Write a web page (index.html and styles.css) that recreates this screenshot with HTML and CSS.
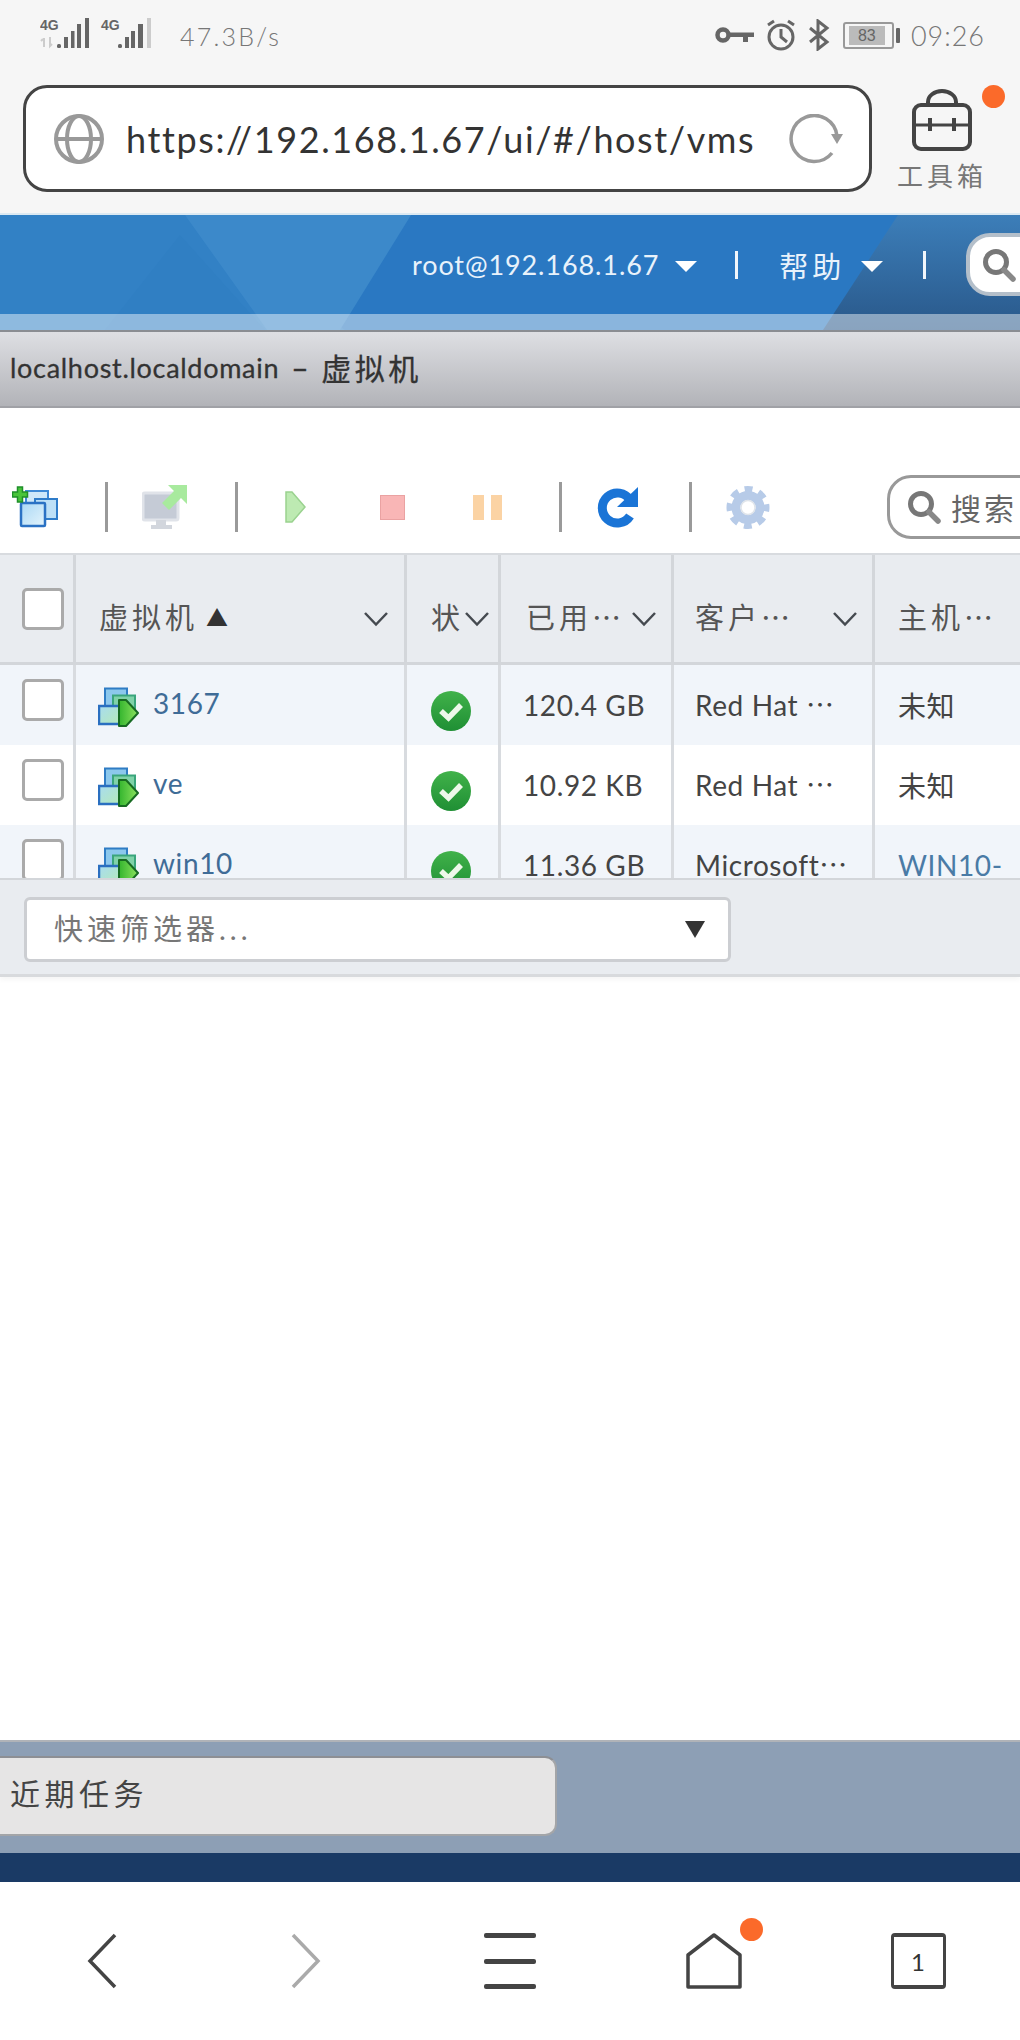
FILE: index.html
```html
<!DOCTYPE html>
<html lang="zh-CN">
<head>
    <meta charset="UTF-8">
    <meta name="viewport" content="width=device-width, initial-scale=1.0">
    <title>localhost.localdomain - 虚拟机</title>
    <link rel="stylesheet" href="styles.css">
</head>
<body>
    <svg class="defs" width="0" height="0">
        <defs>
            <linearGradient id="winFill" x1="0" y1="0" x2="1" y2="1">
                <stop offset="0" stop-color="#a9d8f5"/>
                <stop offset="1" stop-color="#e4f4fc"/>
            </linearGradient>
            <linearGradient id="vmFill" x1="0" y1="0" x2="1" y2="1">
                <stop offset="0" stop-color="#a8dcf0"/>
                <stop offset="1" stop-color="#b6eab8"/>
            </linearGradient>
            <linearGradient id="vmArrow" x1="0" y1="0" x2="1" y2="0">
                <stop offset="0" stop-color="#34b52e"/>
                <stop offset="1" stop-color="#8ce25e"/>
            </linearGradient>
            <linearGradient id="okFill" x1="0" y1="0" x2="0" y2="1">
                <stop offset="0" stop-color="#41b24a"/>
                <stop offset="1" stop-color="#1f8f34"/>
            </linearGradient>
            <symbol id="vm" viewBox="0 0 42 40">
                <rect x="7" y="1.5" width="22" height="20" fill="#8cc8ec" stroke="#2f7cc4" stroke-width="2"/>
                <rect x="15" y="8.500" width="22" height="20" fill="#7fd2a8" stroke="#3aa57c" stroke-width="2"/>
                <rect x="1" y="19" width="22" height="18" fill="url(#vmFill)" stroke="#2a6fc0" stroke-width="2.500"/>
                <path d="M21 13 H28 L40 26 L28 39 H21 Z" fill="url(#vmArrow)" stroke="#176b22" stroke-width="2" stroke-linejoin="round"/>
            </symbol>
            <symbol id="ok" viewBox="0 0 40 40">
                <circle cx="20" cy="20" r="20" fill="url(#okFill)"/>
                <path d="M10 20 L17.500 27 L30 14" fill="none" stroke="#eef8ea" stroke-width="5.500"/>
            </symbol>
            <symbol id="chev" viewBox="0 0 26 16">
                <path d="M2 2 L13 13.500 L24 2" fill="none" stroke="#454a50" stroke-width="2.500"/>
            </symbol>
            <symbol id="mag" viewBox="0 0 34 34">
                <circle cx="14" cy="14" r="10.500" fill="none" stroke="#777" stroke-width="5"/>
                <path d="M22 22 L31 31" stroke="#888" stroke-width="5.500" stroke-linecap="round"/>
            </symbol>
        </defs>
    </svg>

    <div class="status">
        <svg class="signal" width="116" height="34" viewBox="0 0 116 34">
            <text class="sig-text" x="0" y="13">4G</text>
            <text class="sig-text" x="61" y="13">4G</text>
            <path d="M4 30 V21 M3 22 L1 24 M10 20 V29 L12 27" stroke="#ccc" stroke-width="2" fill="none"/>
            <g fill="#666">
                <rect x="17" y="27" width="4" height="4" rx="1.500"/>
                <rect x="24" y="20" width="4" height="11"/>
                <rect x="31" y="14" width="3.500" height="17"/>
                <rect x="37" y="7" width="4" height="24"/>
                <rect x="45" y="1" width="4" height="30"/>
                <rect x="78" y="27" width="4" height="4" rx="1.500"/>
                <rect x="85" y="20" width="4" height="11"/>
                <rect x="91" y="14" width="4" height="17"/>
                <rect x="98" y="7" width="5" height="24"/>
            </g>
            <rect x="107" y="1" width="4" height="30" fill="#ccc"/>
        </svg>
        <span class="speed">47.3B/s</span>
        <svg class="key" width="39" height="17" viewBox="0 0 39 17">
            <circle cx="8" cy="8" r="5.500" fill="none" stroke="#666" stroke-width="4.500"/>
            <path d="M14 5.500 H39 V10 H33 V15 H28 V10 H14 Z" fill="#666"/>
        </svg>
        <svg class="alarm" width="32" height="32" viewBox="0 0 32 32">
            <circle cx="16" cy="18" r="12" fill="none" stroke="#666" stroke-width="3"/>
            <path d="M16 10 V18 L22 23" fill="none" stroke="#666" stroke-width="3"/>
            <path d="M3 6 L9 2 M29 6 L23 2" stroke="#666" stroke-width="3"/>
        </svg>
        <svg class="bt" width="22" height="32" viewBox="0 0 22 32">
            <path d="M2 9 L19 23 L10 30 V2 L19 9 L2 23" fill="none" stroke="#666" stroke-width="3"/>
        </svg>
        <div class="battery"><span class="battery-fill">83</span></div>
        <span class="battery-nub"></span>
        <span class="clock">09:26</span>
    </div>

    <div class="chrome">
        <div class="addr">
            <svg class="globe" width="50" height="50" viewBox="0 0 50 50">
                <circle cx="25" cy="25" r="23" fill="none" stroke="#999" stroke-width="4"/>
                <ellipse cx="25" cy="25" rx="12" ry="23" fill="none" stroke="#999" stroke-width="4"/>
                <path d="M2 25 H48" stroke="#999" stroke-width="4"/>
            </svg>
            <span class="url">https://192.168.1.67/ui/#/host/vms</span>
            <svg class="reload" width="57" height="50" viewBox="0 0 57 50">
                <path d="M45 39 A23 23 0 1 1 50 22" fill="none" stroke="#999" stroke-width="3.500"/>
                <path d="M44 20 H56 L50 30 Z" fill="#999"/>
            </svg>
        </div>
        <div class="toolbox">
            <svg width="60" height="62" viewBox="0 0 60 62">
                <rect x="2" y="16" width="56" height="44" rx="7" fill="none" stroke="#444" stroke-width="4"/>
                <path d="M16 16 V13 A14 11 0 0 1 44 13 V16" fill="none" stroke="#444" stroke-width="4"/>
                <path d="M2 36 H58" stroke="#444" stroke-width="3"/>
                <path d="M18 29 V42 M42 29 V42" stroke="#444" stroke-width="4"/>
            </svg>
            <span class="toolbox-label">工具箱</span>
            <span class="toolbox-dot"></span>
        </div>
    </div>

    <header class="hdr">
        <span class="hdr-tri"></span>
        <div class="hdr-main">
            <span class="hdr-user">root@192.168.1.67</span>
            <span class="caret"></span>
            <span class="hdr-sep"></span>
            <span class="hdr-help">帮助</span>
            <span class="caret"></span>
            <span class="hdr-sep hdr-sep-2"></span>
            <div class="hdr-search">
                <svg width="34" height="34"><use href="#mag"/></svg>
            </div>
        </div>
        <div class="hdr-band"></div>
    </header>

    <div class="title-bar">
        <span>localhost.localdomain</span>
        <span class="title-dash">–</span>
        <span class="title-cn">虚拟机</span>
    </div>

    <div class="toolbar">
        <svg class="tb-add" width="46" height="42" viewBox="0 0 46 42">
            <rect x="14" y="5" width="22" height="22" fill="#cfe8f9" stroke="#3f8ad6" stroke-width="2"/>
            <rect x="23" y="13" width="22" height="20" fill="#bde0f7" stroke="#2f7cc9" stroke-width="2"/>
            <rect x="9" y="17" width="24" height="23" rx="1" fill="url(#winFill)" stroke="#2b72c4" stroke-width="2.500"/>
            <path d="M5.500 1 H10.500 V6 H15.500 V11 H10.500 V16 H5.500 V11 H.5 V6 H5.500 Z" fill="#49c43a" stroke="#1f8f2a" stroke-width="1.500"/>
        </svg>
        <span class="tb-sep tb-sep-1"></span>
        <svg class="tb-console" width="46" height="46" viewBox="0 0 46 46">
            <rect x="1" y="9" width="35" height="27" rx="2" fill="#c5cbd6" stroke="#e0e3e9" stroke-width="3"/>
            <path d="M14 36 H24 V41 H30 V45 H9 V41 H14 Z" fill="#d2d6dd"/>
            <path d="M26 1 H45 V20 L39 14 L27 26 L20 19 L32 7 Z" fill="#a8ea9e"/>
        </svg>
        <span class="tb-sep tb-sep-2"></span>
        <svg class="tb-play" width="21" height="32" viewBox="0 0 21 32">
            <path d="M1 1 H7 L20 16 L7 31 H1 Z" fill="#bdeab2" stroke="#9ad28f" stroke-width="1.500"/>
        </svg>
        <span class="tb-stop"></span>
        <span class="tb-pause"><i></i><i></i></span>
        <span class="tb-sep tb-sep-3"></span>
        <svg class="tb-refresh" width="43" height="44" viewBox="0 0 43 44">
            <path d="M33 15 A15 15 0 1 0 33 31" fill="none" stroke="#1a74d6" stroke-width="9"/>
            <path d="M41 2 V22 H20 Z" fill="#1a74d6"/>
        </svg>
        <span class="tb-sep tb-sep-4"></span>
        <svg class="tb-gear" width="46" height="45" viewBox="0 0 46 45">
            <circle cx="23" cy="22.500" r="17.500" fill="none" stroke="#b7cbe8" stroke-width="8" stroke-dasharray="7.500 6.240" stroke-dashoffset="3.750"/>
            <circle cx="23" cy="22.500" r="12" fill="none" stroke="#b7cbe8" stroke-width="9"/>
            <circle cx="23" cy="22.500" r="7" fill="#fff" stroke="#dfe4ea" stroke-width="1.500"/>
        </svg>
        <div class="tb-search">
            <svg width="34" height="34"><use href="#mag"/></svg>
            <span>搜索</span>
        </div>
    </div>

    <div class="grid-wrap">
        <table class="grid">
            <colgroup>
                <col class="c-check"><col class="c-name"><col class="c-state"><col class="c-used"><col class="c-guest"><col class="c-host">
            </colgroup>
            <thead>
                <tr>
                    <th><span class="box"></span></th>
                    <th><div class="th-in"><span>虚拟机</span><span class="sort">▲</span><svg class="chev" width="26" height="16"><use href="#chev"/></svg></div></th>
                    <th class="th-tight"><div class="th-in"><span>状</span><svg class="chev" width="26" height="16"><use href="#chev"/></svg></div></th>
                    <th class="th-used"><div class="th-in"><span>已用<span class="ell">…</span></span><svg class="chev" width="26" height="16"><use href="#chev"/></svg></div></th>
                    <th class="th-guest"><div class="th-in"><span>客户<span class="ell">…</span></span><svg class="chev" width="26" height="16"><use href="#chev"/></svg></div></th>
                    <th class="th-host"><div class="th-in"><span>主机<span class="ell">…</span></span></div></th>
                </tr>
            </thead>
            <tbody>
                <tr>
                    <td class="td-check"><span class="box"></span></td>
                    <td class="td-name"><div class="vm"><svg width="42" height="40"><use href="#vm"/></svg><a>3167</a></div></td>
                    <td class="td-state"><svg width="40" height="40"><use href="#ok"/></svg></td>
                    <td class="td-used">120.4 GB</td>
                    <td class="td-guest">Red Hat <span class="ell">…</span></td>
                    <td class="td-host">未知</td>
                </tr>
                <tr>
                    <td class="td-check"><span class="box"></span></td>
                    <td class="td-name"><div class="vm"><svg width="42" height="40"><use href="#vm"/></svg><a>ve</a></div></td>
                    <td class="td-state"><svg width="40" height="40"><use href="#ok"/></svg></td>
                    <td class="td-used">10.92 KB</td>
                    <td class="td-guest">Red Hat <span class="ell">…</span></td>
                    <td class="td-host">未知</td>
                </tr>
                <tr>
                    <td class="td-check"><span class="box"></span></td>
                    <td class="td-name"><div class="vm"><svg width="42" height="40"><use href="#vm"/></svg><a>win10</a></div></td>
                    <td class="td-state"><svg width="40" height="40"><use href="#ok"/></svg></td>
                    <td class="td-used">11.36 GB</td>
                    <td class="td-guest">Microsoft<span class="ell">…</span></td>
                    <td class="td-host"><a>WIN10-</a></td>
                </tr>
            </tbody>
        </table>
    </div>

    <div class="filter-bar">
        <div class="filter">
            <span class="filter-text">快速筛选器...</span>
            <span class="filter-arrow"></span>
        </div>
    </div>

    <div class="spacer"></div>

    <div class="tasks">
        <div class="tasks-btn">近期任务</div>
    </div>
    <div class="navy"></div>

    <nav class="nav">
        <svg width="30" height="56" viewBox="0 0 30 56"><path d="M28 2 L3 28 L28 54" fill="none" stroke="#444" stroke-width="3.500"/></svg>
        <svg width="30" height="56" viewBox="0 0 30 56"><path d="M2 2 L27 28 L2 54" fill="none" stroke="#aaa" stroke-width="3.500"/></svg>
        <div class="nav-menu"><i></i><i></i><i></i></div>
        <div class="nav-home">
            <svg width="56" height="56" viewBox="0 0 56 56"><path d="M2 54 V22 L28 2 L54 22 V54 Z" fill="none" stroke="#444" stroke-width="3.500" stroke-linejoin="round"/></svg>
            <span class="nav-dot"></span>
        </div>
        <div class="nav-tabs">1</div>
    </nav>
</body>
</html>
```

FILE: styles.css
```css
* {
    box-sizing: border-box;
}
html, body {
    margin: 0;
    padding: 0;
}
body {
    width: 1020px;
    height: 2040px;
    overflow: hidden;
    display: flex;
    flex-direction: column;
    background-color: #fff;
    font-family: Lato, "Noto Sans CJK SC", sans-serif;
    color: #444;
}
.defs {
    position: absolute;
}

/* status bar */
.status {
    height: 85px;
    flex: none;
    display: flex;
    align-items: center;
    background-color: #f6f6f6;
    padding: 0 35px 0 40px;
    color: #777;
}
.status > * {
    flex: none;
}
.signal {
    margin-top: -17px;
}
.sig-text {
    font-family: "Liberation Sans", sans-serif;
    font-size: 14px;
    font-weight: bold;
    fill: #666;
}
.speed {
    margin-left: 24px;
    font-size: 25px;
    font-weight: 300;
    letter-spacing: 2.2px;
    margin-top: -14px;
}
.key {
    margin-left: auto;
    margin-top: -15px;
}
.alarm {
    margin-left: 11px;
    margin-top: -15px;
}
.bt {
    margin-left: 11px;
    margin-top: -15px;
}
.battery {
    margin-left: 13px;
    margin-top: -15px;
    width: 51px;
    height: 27px;
    border: 2px solid #999;
    border-radius: 3px;
    padding: 2px 7px 2px 4px;
}
.battery-fill {
    display: block;
    height: 100%;
    background-color: #bbb;
    font-family: "Liberation Sans", sans-serif;
    font-size: 16px;
    line-height: 19px;
    text-align: center;
    color: #666;
}
.battery-nub {
    width: 4px;
    height: 15px;
    margin-left: 2px;
    margin-top: -15px;
    background-color: #666;
    border-radius: 1px;
}
.clock {
    margin-left: 11px;
    margin-top: -14px;
    font-size: 27px;
    font-weight: 300;
    letter-spacing: 1px;
}

/* address row */
.chrome {
    height: 130px;
    flex: none;
    display: flex;
    background-color: #f6f6f6;
    padding-left: 23px;
    border-bottom: 2px solid #dbe9f2;
}
.addr {
    width: 849px;
    height: 107px;
    display: flex;
    align-items: center;
    background-color: #fff;
    border: 3px solid #444;
    border-radius: 24px;
    padding-left: 28px;
}
.addr > * {
    flex: none;
}
.url {
    margin-left: 22px;
    width: 640px;
    font-size: 36px;
    letter-spacing: 1.6px;
    white-space: nowrap;
    color: #333;
}
.reload {
    margin-left: 21px;
}
.toolbox {
    position: relative;
    margin-left: 25px;
    width: 90px;
    display: flex;
    flex-direction: column;
    align-items: center;
    padding-top: 4px;
}
.toolbox-label {
    margin-top: 7px;
    font-size: 26px;
    letter-spacing: 4px;
    line-height: 36px;
    white-space: nowrap;
    color: #777;
}
.toolbox-dot {
    position: absolute;
    left: 85px;
    top: 0;
    width: 23px;
    height: 23px;
    border-radius: 50%;
    background-color: #fb6a2a;
}

/* blue header */
.hdr {
    position: relative;
    height: 115px;
    flex: none;
    display: flex;
    flex-direction: column;
    overflow: hidden;
    background-color: #2a78c2;
}
.hdr::before {
    content: "";
    position: absolute;
    left: 0;
    top: 0;
    width: 411px;
    height: 100%;
    background-color: #3281c5;
    clip-path: polygon(0 0, 185px 0, 345px 100%, 0 100%);
}
.hdr::after {
    content: "";
    position: absolute;
    left: 0;
    top: 0;
    width: 411px;
    height: 100%;
    background-color: #3c89ca;
    clip-path: polygon(185px 0, 411px 0, 340px 100%, 267px 100%);
}
.hdr-tri {
    position: absolute;
    left: 105px;
    top: 20px;
    width: 160px;
    height: 95px;
    background-color: #307fc3;
    clip-path: polygon(75px 0, 160px 100%, 0 100%);
}
.hdr-main {
    position: relative;
    z-index: 1;
    height: 99px;
    display: flex;
    align-items: center;
    padding-left: 412px;
    color: #e8f2fb;
}
.hdr-main > * {
    flex: none;
}
.hdr-main::before {
    content: "";
    position: absolute;
    z-index: -1;
    left: 823px;
    top: 0;
    width: 197px;
    height: 115px;
    background: linear-gradient(#3c7eb9, #29588a);
    clip-path: polygon(75px 0, 197px 0, 197px 100%, 0 100%);
}
.hdr-user {
    font-size: 27px;
    white-space: nowrap;
    letter-spacing: .9px;
}
.caret {
    margin-left: 16px;
    width: 0;
    height: 0;
    border-left: 11px solid transparent;
    border-right: 11px solid transparent;
    border-top: 11px solid #fff;
    margin-top: 3px;
}
.hdr-sep {
    width: 3px;
    height: 28px;
    margin-left: 38px;
    background-color: #f1f6fb;
}
.hdr-help {
    margin-left: 41px;
    font-size: 29px;
    letter-spacing: 4px;
    white-space: nowrap;
}
.hdr-sep-2 {
    margin-left: 40px;
}
.hdr-search {
    margin-left: 40px;
    width: 100px;
    height: 63px;
    background-color: #fff;
    border: 4px solid #b4bfca;
    border-radius: 24px;
    display: flex;
    align-items: center;
    padding-left: 12px;
}
.hdr-band {
    position: relative;
    z-index: 1;
    height: 16px;
    background-color: rgba(255, 255, 255, .45);
}

/* title */
.title-bar {
    height: 78px;
    flex: none;
    display: flex;
    align-items: center;
    padding: 0 0 4px 10px;
    background: linear-gradient(#dedfe3, #b2b3b8);
    border-top: 2px solid #8a8d92;
    border-bottom: 2px solid #a0a1a6;
    font-size: 27px;
    letter-spacing: .7px;
    color: #333;
    white-space: nowrap;
    -webkit-text-stroke: .3px #333;
}
.title-dash {
    margin-left: 12px;
    font-size: 30px;
}
.title-cn {
    font-size: 30px;
    letter-spacing: 3.5px;
    margin-left: 12px;
}

/* toolbar */
.toolbar {
    height: 145px;
    flex: none;
    display: flex;
    align-items: center;
    padding-top: 53px;
    padding-left: 12px;
    overflow: hidden;
}
.toolbar > * {
    flex: none;
}
.tb-sep {
    width: 3px;
    height: 50px;
    background-color: #9a9a9a;
}
.tb-sep-1 { margin-left: 47px; }
.tb-console { margin-left: 34px; }
.tb-sep-2 { margin-left: 47px; }
.tb-play { margin-left: 47px; }
.tb-stop {
    margin-left: 74px;
    width: 25px;
    height: 25px;
    background-color: #f9b6b6;
    border: 1px solid #eaa2a2;
}
.tb-pause {
    margin-left: 68px;
    width: 29px;
    height: 25px;
    display: flex;
    justify-content: space-between;
}
.tb-pause i {
    width: 11px;
    background-color: #fbd3a4;
}
.tb-sep-3 { margin-left: 57px; }
.tb-refresh { margin-left: 35px; }
.tb-sep-4 { margin-left: 49px; }
.tb-gear { margin-left: 33px; }
.tb-search {
    margin-left: 116px;
    width: 170px;
    height: 64px;
    display: flex;
    align-items: center;
    gap: 10px;
    padding-left: 17px;
    border: 3px solid #999;
    border-radius: 24px;
    font-size: 30px;
    letter-spacing: 3px;
    color: #666;
}
.tb-search svg {
    flex: none;
}
.tb-search span {
    white-space: nowrap;
}

/* vm table */
.grid-wrap {
    height: 325px;
    flex: none;
    overflow: hidden;
    border-top: 2px solid #d8dbdf;
}
.grid {
    width: 1100px;
    table-layout: fixed;
    border-collapse: separate;
    border-spacing: 0;
}
.c-check { width: 76px; }
.c-name { width: 331px; }
.c-state { width: 94px; }
.c-used { width: 173px; }
.c-guest { width: 201px; }
.grid th {
    height: 110px;
    padding: 0;
    background-color: #e9ecf0;
    border-right: 3px solid #d3d6da;
    border-bottom: 3px solid #d3d6da;
    font-weight: normal;
    font-size: 29px;
    letter-spacing: 4px;
    color: #555;
    text-align: left;
    white-space: nowrap;
}
.th-in {
    display: flex;
    align-items: center;
    padding: 14px 15px 0 23px;
}
.chev {
    margin-left: auto;
    flex: none;
    margin-top: 6px;
}
.sort {
    margin-left: 8px;
    font-size: 22px;
    color: #333;
    letter-spacing: 0;
}
.ell {
    font-family: "Noto Sans CJK SC", sans-serif;
    letter-spacing: 0;
    line-height: 1;
}
.th-tight .th-in {
    padding-left: 24px;
    padding-right: 13px;
}
.th-used .th-in {
    padding-left: 25px;
    padding-right: 14px;
}
.th-guest .th-in {
    padding-left: 21px;
    padding-right: 14px;
}
.box {
    display: block;
    width: 42px;
    height: 42px;
    margin-left: 22px;
    background-color: #fff;
    border: 3px solid #aaa;
    border-radius: 5px;
}
.grid td {
    height: 80px;
    padding: 0;
    border-right: 3px solid #d8dbdf;
    font-size: 28px;
    letter-spacing: .6px;
    color: #444;
    white-space: nowrap;
}
.grid tbody tr:nth-child(odd) td {
    background-color: #f1f5fa;
}
.td-check .box {
    margin-top: -10px;
}
.td-name {
    padding-left: 22px !important;
}
.vm {
    display: flex;
    align-items: center;
    margin-top: 4px;
}
.vm svg {
    flex: none;
}
.vm a {
    margin-left: 13px;
    margin-top: -8px;
    color: #3f6c97;
}
.td-state {
    padding-left: 24px !important;
}
.td-state svg {
    display: block;
    margin-top: 12px;
}
.td-used {
    padding-left: 22px !important;
}
.td-guest {
    padding-left: 21px !important;
    letter-spacing: 2.6px;
}
.td-host {
    padding-left: 23px !important;
}
.td-host a {
    color: #4a7ba6;
}

/* filter */
.filter-bar {
    height: 99px;
    flex: none;
    padding: 17px 0 0 24px;
    background-color: #e9ecf0;
    border-top: 2px solid #d3d6da;
    border-bottom: 3px solid #d8dadd;
    box-shadow: 0 3px 5px rgba(0, 0, 0, .04);
}
.filter {
    width: 707px;
    height: 65px;
    display: flex;
    align-items: center;
    justify-content: space-between;
    padding: 0 23px 0 27px;
    background-color: #fff;
    border: 3px solid #ccced2;
    border-radius: 6px;
    font-size: 29px;
    letter-spacing: 4px;
    color: #777;
}
.filter-text {
    margin-top: -6px;
}
.filter-arrow {
    width: 0;
    height: 0;
    border-left: 10px solid transparent;
    border-right: 10px solid transparent;
    border-top: 17px solid #333;
}
.spacer {
    flex: 1;
}

/* recent tasks */
.tasks {
    height: 113px;
    flex: none;
    padding-top: 14px;
    background-color: #8d9fb5;
    border-top: 2px solid #b0b3b8;
}
.tasks-btn {
    width: 557px;
    height: 80px;
    display: flex;
    align-items: center;
    padding: 0 0 8px 10px;
    background-color: #e6e5e5;
    border: 2px solid #a3a5a8;
    border-left: 0;
    border-top-color: #8d8f94;
    border-radius: 0 12px 12px 0;
    font-size: 30px;
    letter-spacing: 4.5px;
    color: #444;
}
.navy {
    height: 29px;
    flex: none;
    background-color: #1a3a65;
}

/* bottom nav */
.nav {
    height: 158px;
    flex: none;
    display: grid;
    grid-template-columns: repeat(5, 1fr);
    justify-items: center;
    align-items: start;
    padding-top: 51px;
    background-color: #fff;
}
.nav-menu {
    width: 52px;
    height: 56px;
    display: flex;
    flex-direction: column;
    justify-content: space-between;
}
.nav-menu i {
    height: 5px;
    border-radius: 2px;
    background-color: #444;
}
.nav-home {
    position: relative;
    width: 56px;
    height: 56px;
}
.nav-dot {
    position: absolute;
    left: 54px;
    top: -15px;
    width: 23px;
    height: 23px;
    border-radius: 50%;
    background-color: #fb6a2a;
}
.nav-tabs {
    width: 55px;
    height: 56px;
    display: flex;
    align-items: center;
    justify-content: center;
    border: 3px solid #444;
    border-top-width: 4px;
    border-bottom-width: 4px;
    border-radius: 4px;
    font-size: 24px;
    color: #333;
}
```
